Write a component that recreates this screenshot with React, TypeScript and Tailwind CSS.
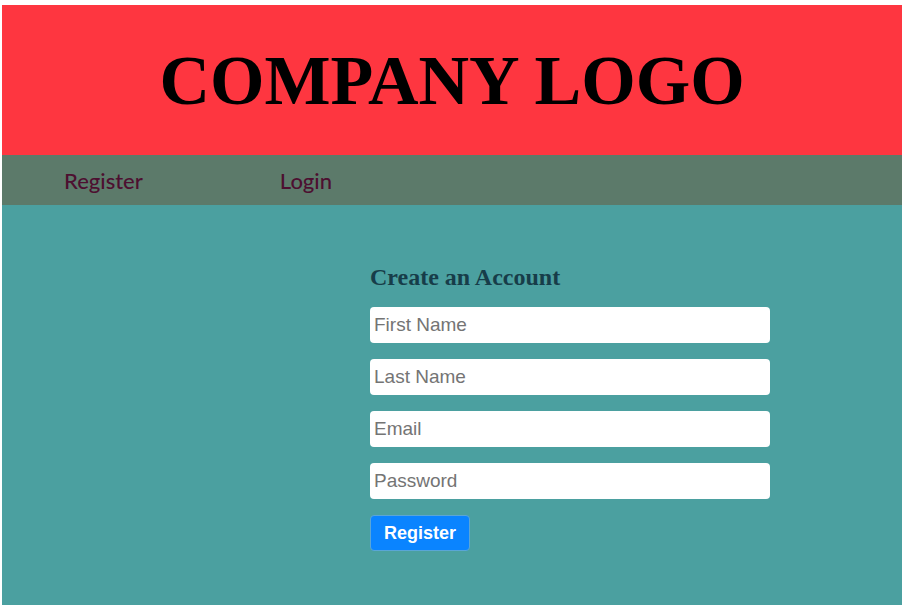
import React from "react";

export default function App() {
  const fields = ["First Name", "Last Name", "Email", "Password"];
  return (
    <div className="bg-white pt-[5px] px-[2px] h-[605px] flex flex-col">
      <header className="bg-[#fe3640] h-[150px] flex items-center justify-center">
        <h1 className="text-[70px] font-bold text-black leading-none mt-[2px]" style={{ fontFamily: '"Liberation Serif", "Times New Roman", serif' }}>
          COMPANY LOGO
        </h1>
      </header>
      <nav className="bg-[#5c7a6a] h-[50px] flex items-center pl-[62px] gap-[137px] text-[22px] font-medium text-[#4d0f30]" style={{ fontFamily: 'Lato, "Open Sans", sans-serif' }}>
        <a className="cursor-pointer">Register</a>
        <a className="cursor-pointer">Login</a>
      </nav>
      <main className="bg-[#4ba0a0] flex-1 pl-[368px] pt-[58px]">
        <form className="w-[400px] flex flex-col" onSubmit={(e) => e.preventDefault()}>
          <h2 className="text-[24px] font-bold text-[#173d49] leading-[28px] mb-[16px]" style={{ fontFamily: '"Liberation Serif", "Times New Roman", serif' }}>
            Create an Account
          </h2>
          <div className="flex flex-col gap-[16px]" style={{ fontFamily: '"Liberation Sans", Arial, sans-serif' }}>
            {fields.map((f) => (
              <input
                key={f}
                type={f === "Password" ? "password" : f === "Email" ? "email" : "text"}
                placeholder={f}
                className="h-[36px] w-full bg-white rounded-[4px] px-[4px] text-[19px] text-[#333] placeholder:text-[#747474] outline-none"
              />
            ))}
            <button
              type="submit"
              className="w-[100px] h-[36px] bg-[#0a84ff] border border-[#5aa6d6] rounded-[4px] text-white text-[18px] font-bold"
            >
              Register
            </button>
          </div>
        </form>
      </main>
    </div>
  );
}
